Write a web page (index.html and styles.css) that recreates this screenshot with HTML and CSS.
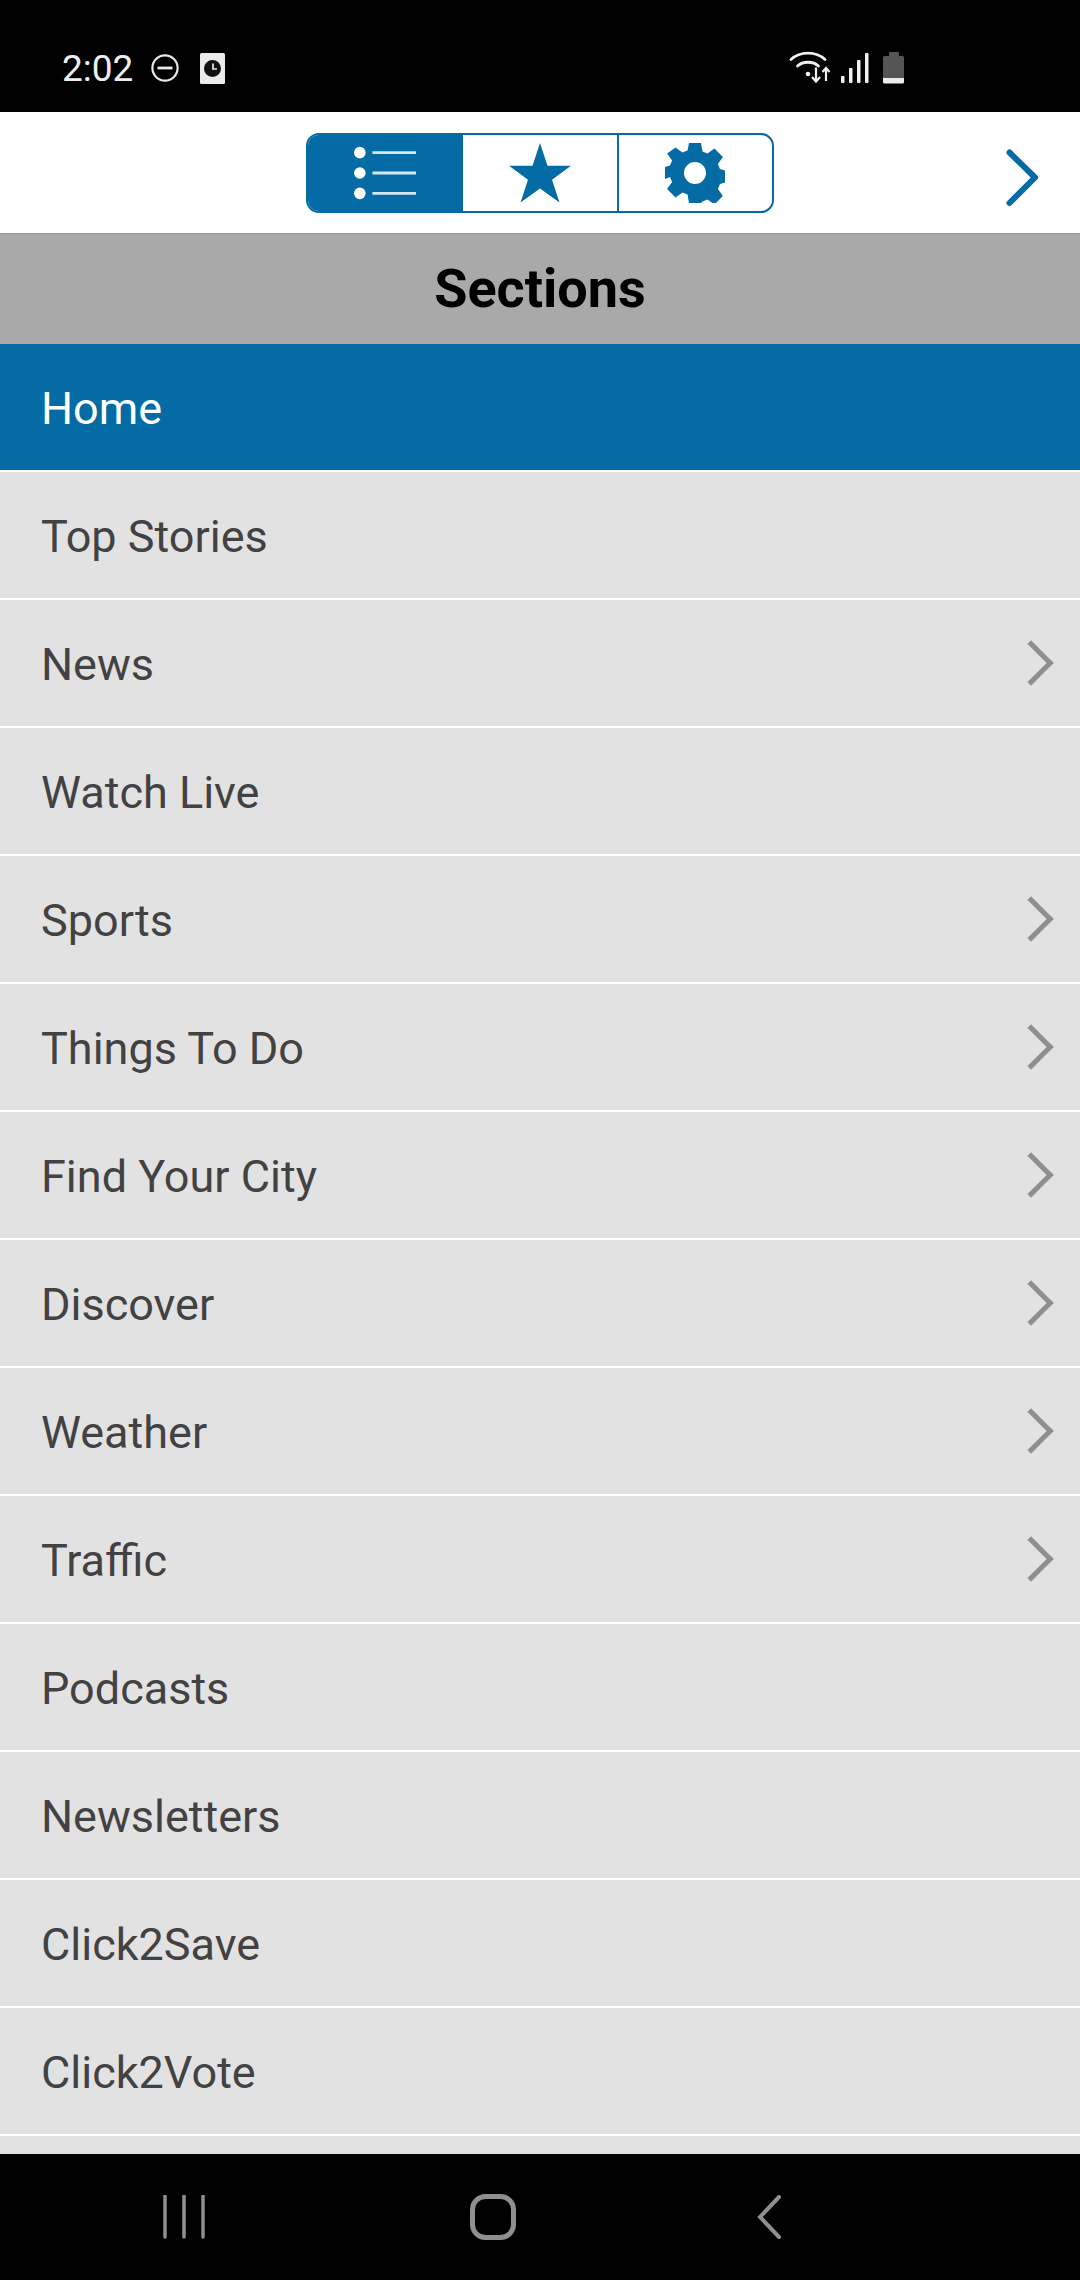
FILE: index.html
```html
<!DOCTYPE html>
<html>
<head>
    <title>Sections</title>
    <meta charset="UTF-8">
    <link rel="stylesheet" href="styles.css">
</head>
<body>
    <div class="phone">
        <div class="status-bar">
            <div class="status-left">
                <span class="clock">2:02</span>
                <svg class="icon-dnd" viewBox="0 0 30 30"><circle cx="15" cy="15" r="12.6" fill="none" stroke="#e8e8e8" stroke-width="2.2"/><rect x="7.5" y="13.6" width="15" height="2.8" fill="#e8e8e8"/></svg>
                <svg class="icon-alarm" viewBox="0 0 26 32"><rect width="25" height="31" rx="1.5" fill="#ececec"/><circle cx="12.5" cy="15.5" r="8.5" fill="#111"/><path d="M13 10.5v5.5h4" fill="none" stroke="#ececec" stroke-width="1.7"/></svg>
            </div>
            <div class="status-right">
                <svg class="icon-wifi" viewBox="0 0 44 34">
                    <path d="M2 9.500C11 1 27 1 36 9.500" fill="none" stroke="#f0f0f0" stroke-width="2.800" stroke-linecap="round"/>
                    <path d="M8.500 16C14 11 24 11 29.500 16" fill="none" stroke="#f0f0f0" stroke-width="2.800" stroke-linecap="round"/>
                    <circle cx="19" cy="24" r="2.300" fill="#f0f0f0"/>
                    <path d="M27 17.500v13M23 27l4 4.500 4-4.500" fill="none" stroke="#f0f0f0" stroke-width="2.200"/>
                    <path d="M37 31V18.500M33.500 22l3.500-4 3.500 4" fill="none" stroke="#f0f0f0" stroke-width="2.200"/>
                </svg>
                <svg class="icon-signal" viewBox="0 0 28 32">
                    <rect x="0" y="24" width="3.500" height="7" rx="1" fill="#f0f0f0"/>
                    <rect x="8" y="16" width="3.500" height="15" rx="1" fill="#f0f0f0"/>
                    <rect x="16" y="8" width="3.500" height="23" rx="1" fill="#f0f0f0"/>
                    <rect x="24" y="1" width="3.500" height="30" rx="1" fill="#f0f0f0"/>
                </svg>
                <svg class="icon-battery" viewBox="0 0 22 33">
                    <path d="M6 5V2a1 1 0 0 1 1-1h8a1 1 0 0 1 1 1v3z" fill="#555"/>
                    <path d="M0 27V6.500A1.500 1.500 0 0 1 1.500 5h18A1.500 1.500 0 0 1 21 6.500V27z" fill="#555"/>
                    <path d="M0 27h21v4a1.500 1.500 0 0 1-1.500 1.500h-18A1.500 1.500 0 0 1 0 31z" fill="#ececec"/>
                </svg>
            </div>
        </div>

        <div class="toolbar">
            <div class="tabs">
                <div class="tab active">
                    <svg class="tab-icon" viewBox="0 0 64 56">
                        <circle cx="6" cy="7" r="6" fill="#fff"/><circle cx="6" cy="28" r="6" fill="#fff"/><circle cx="6" cy="49" r="6" fill="#fff"/>
                        <path d="M19 7h45M19 28h45M19 49h45" stroke="#d5e6f0" stroke-width="3"/>
                    </svg>
                </div>
                <div class="tab">
                    <svg class="tab-icon" viewBox="0 0 62 60"><polygon points="31,0 38.500,22.800 62,22.800 43,36.800 50.500,59.500 31,45.500 11.500,59.500 19,36.800 0,22.800 23.500,22.800" fill="#046ba4"/></svg>
                </div>
                <div class="tab">
                    <svg class="tab-icon" viewBox="0 0 60 60"><path fill="#046ba4" fill-rule="evenodd" d="M24 0h12l1.500 8.500 5 2.100 7-5 8.400 8.400-5 7 2.100 5 5 1.500v12l-5 1.500-2.100 5 5 7-8.400 8.400-7-5-5 2.100L36 60H24l-1.500-8.500-5-2.100-7 5L2.100 46l5-7-2.100-5L0 36V24l5-1.500 2.100-5-5-7 8.400-5.900 7 5 5-2.100zM30 19a11 11 0 1 0 0 22 11 11 0 0 0 0-22z"/></svg>
                </div>
            </div>
            <svg class="toolbar-next" viewBox="0 0 34 58"><path d="M3.500 3.500L29 28.500 3.500 54" fill="none" stroke="#046ba4" stroke-width="6" stroke-linecap="round" stroke-linejoin="round"/></svg>
        </div>

        <div class="section-title">Sections</div>

        <ul class="menu">
            <li class="menu-item selected">Home</li>
            <li class="menu-item">Top Stories</li>
            <li class="menu-item has-sub">News</li>
            <li class="menu-item">Watch Live</li>
            <li class="menu-item has-sub">Sports</li>
            <li class="menu-item has-sub">Things To Do</li>
            <li class="menu-item has-sub">Find Your City</li>
            <li class="menu-item has-sub">Discover</li>
            <li class="menu-item has-sub">Weather</li>
            <li class="menu-item has-sub">Traffic</li>
            <li class="menu-item">Podcasts</li>
            <li class="menu-item">Newsletters</li>
            <li class="menu-item">Click2Save</li>
            <li class="menu-item">Click2Vote</li>
            <li class="menu-item"></li>
        </ul>

        <div class="nav-bar">
            <svg class="nav-icon" viewBox="0 0 44 44"><path d="M3 1v41M22 1v41M41 1v41" stroke="#8f8f8f" stroke-width="3.500" stroke-linecap="round"/></svg>
            <svg class="nav-icon" viewBox="0 0 46 46"><rect x="2.500" y="2.500" width="41" height="41" rx="13" fill="none" stroke="#8f8f8f" stroke-width="5"/></svg>
            <svg class="nav-icon" viewBox="0 0 26 44"><path d="M23 2L4 22l19 20" fill="none" stroke="#8f8f8f" stroke-width="4" stroke-linecap="round"/></svg>
        </div>
    </div>
</body>
</html>
```

FILE: styles.css
```css
html, body {
    margin: 0;
    padding: 0;
}
body {
    width: 1080px;
    height: 2280px;
    overflow: hidden;
    font-family: Roboto, "Liberation Sans", sans-serif;
    background: #e2e2e2;
}
.phone {
    display: flex;
    flex-direction: column;
    height: 2280px;
}
.status-bar {
    height: 112px;
    flex: none;
    background: #000;
    display: flex;
    justify-content: space-between;
    box-sizing: border-box;
    padding: 50px 175px 0 62px;
}
.status-left, .status-right {
    display: flex;
    align-items: flex-start;
}
.clock {
    color: #eeeeee;
    font-size: 37px;
    line-height: 38px;
    letter-spacing: 0;
    margin-right: 17px;
}
.icon-dnd {
    width: 30px;
    height: 30px;
    margin: 3px 20px 0 0;
}
.icon-alarm {
    width: 26px;
    height: 32px;
    margin-top: 3px;
}
.icon-wifi {
    width: 44px;
    height: 34px;
    margin-right: 8px;
}
.icon-signal {
    width: 28px;
    height: 32px;
    margin: 2px 14px 0 0;
}
.icon-battery {
    width: 22px;
    height: 33px;
    margin-top: 1px;
}
.toolbar {
    height: 121px;
    flex: none;
    background: #fff;
    display: flex;
    justify-content: center;
    align-items: flex-start;
    position: relative;
}
.tabs {
    display: flex;
    width: 468px;
    height: 80px;
    margin-top: 21px;
    box-sizing: border-box;
    border: 2px solid #046ba4;
    border-radius: 13px;
    overflow: hidden;
}
.tab {
    flex: 1;
    display: flex;
    align-items: center;
    justify-content: center;
    border-left: 2px solid #046ba4;
}
.tab:first-child {
    border-left: none;
}
.tab.active {
    background: #046ba4;
}
.tab-icon {
    width: 62px;
    height: 60px;
}
.toolbar-next {
    position: absolute;
    right: 40px;
    top: 37px;
    width: 34px;
    height: 58px;
}
.section-title {
    height: 111px;
    flex: none;
    box-sizing: border-box;
    background: #a9a9a9;
    border-top: 1px solid #999;
    color: #000;
    font-size: 54px;
    font-weight: 700;
    line-height: 110px;
    text-align: center;
}
.menu {
    list-style: none;
    margin: 0;
    padding: 0;
    flex: 1;
    overflow: hidden;
}
.menu-item {
    height: 128px;
    box-sizing: border-box;
    border-bottom: 2px solid #fff;
    background: #e2e2e2;
    color: #424242;
    font-size: 45px;
    line-height: 130px;
    padding-left: 41px;
    position: relative;
}
.menu-item.selected {
    background: #046ba4;
    color: #fff;
}
.has-sub::after {
    content: "";
    position: absolute;
    right: 33px;
    top: 47px;
    width: 27px;
    height: 27px;
    border-top: 5px solid #8f8f8f;
    border-right: 5px solid #8f8f8f;
    transform: rotate(45deg);
}
.nav-bar {
    height: 126px;
    flex: none;
    background: #000;
    display: grid;
    grid-template-columns: 162px 46px 262px 46px 240px 26px;
    padding-left: 0;
    align-items: center;
}
.nav-icon {
    height: 44px;
    width: 44px;
}
.nav-icon:nth-child(1) {
    grid-column: 2;
}
.nav-icon:nth-child(2) {
    grid-column: 4;
    width: 46px;
    height: 46px;
}
.nav-icon:nth-child(3) {
    grid-column: 6;
    width: 26px;
}
```
